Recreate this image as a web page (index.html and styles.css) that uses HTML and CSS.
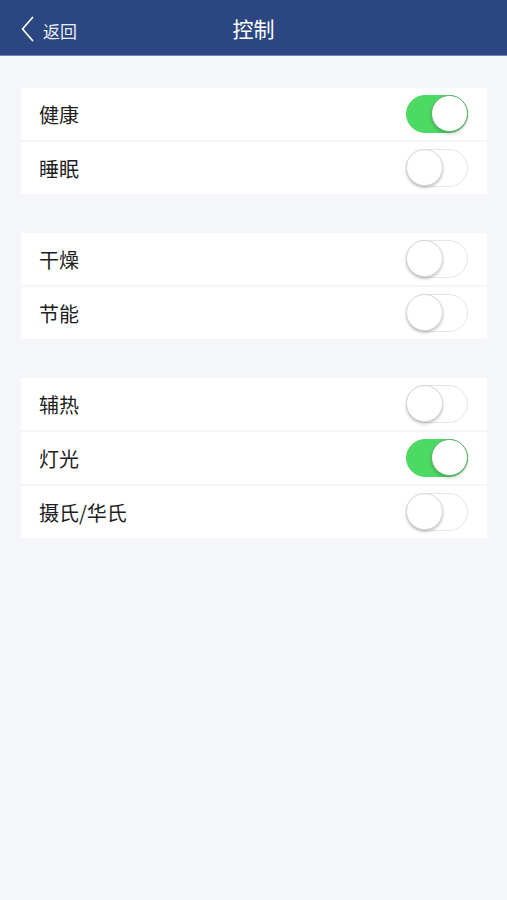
FILE: index.html
```html
<!DOCTYPE html>
<html lang="zh-CN">
<head>
<meta charset="utf-8">
<title>控制</title>
<link rel="stylesheet" href="styles.css">
</head>
<body>
<header class="navbar">
  <a class="back">
    <svg class="chev" width="13" height="26" viewBox="0 0 13 26"><path d="M11.5 1.5 L1.5 13 L11.5 24.5" fill="none" stroke="#ffffff" stroke-width="1.7" stroke-linecap="round" stroke-linejoin="round"/></svg>
    <span class="back-text">返回</span>
  </a>
  <h1 class="title">控制</h1>
</header>
<main class="content">
  <section class="group">
    <div class="row"><span class="label">健康</span><span class="switch on"><span class="knob"></span></span></div>
    <div class="row"><span class="label">睡眠</span><span class="switch"><span class="knob"></span></span></div>
  </section>
  <section class="group">
    <div class="row"><span class="label">干燥</span><span class="switch"><span class="knob"></span></span></div>
    <div class="row"><span class="label">节能</span><span class="switch"><span class="knob"></span></span></div>
  </section>
  <section class="group">
    <div class="row"><span class="label">辅热</span><span class="switch"><span class="knob"></span></span></div>
    <div class="row"><span class="label">灯光</span><span class="switch on"><span class="knob"></span></span></div>
    <div class="row"><span class="label">摄氏/华氏</span><span class="switch"><span class="knob"></span></span></div>
  </section>
</main>
</body>
</html>
```
FILE: styles.css
```css
html, body {
  margin: 0;
  padding: 0;
}
body {
  background: #f4f6f9;
  font-family: "Noto Sans CJK SC", "Noto Sans", sans-serif;
  height: 900px;
}
.navbar {
  height: 55px;
  background: #2b4680;
  border-bottom: 1px solid #6f86b5;
  position: relative;
  display: flex;
  align-items: center;
  justify-content: center;
}
.back {
  position: absolute;
  left: 21px;
  top: 14px;
  display: flex;
  align-items: center;
  gap: 9px;
  color: #ffffff;
}
.chev {
  display: block;
}
.back-text {
  font-size: 17px;
  line-height: 26px;
  padding-top: 4px;
  color: #e8edf6;
}
.title {
  margin: 0;
  font-size: 21px;
  font-weight: normal;
  color: #ffffff;
  line-height: 56px;
}
.content {
  padding: 32px 20px 0 21px;
  display: flex;
  flex-direction: column;
  gap: 39px;
}
.group {
  display: flex;
  flex-direction: column;
  gap: 2px;
}
.row {
  height: 52px;
  background: #ffffff;
  display: flex;
  align-items: center;
  justify-content: space-between;
  padding: 0 19px 0 18px;
}
.label {
  font-size: 20px;
  color: #1e1e1e;
}
.switch {
  width: 62px;
  height: 38px;
  border-radius: 19px;
  box-sizing: border-box;
  border: 1.5px solid #e6e6e6;
  background: #ffffff;
  position: relative;
}
.knob {
  position: absolute;
  top: -1px;
  left: -1px;
  width: 37px;
  height: 37px;
  border-radius: 50%;
  background: #ffffff;
  box-sizing: border-box;
  border: 1px solid #d6d6d6;
  box-shadow: 0 2px 3px rgba(0, 0, 0, 0.22);
}
.switch.on {
  background: #4cd964;
  border-color: #4cd964;
}
.switch.on .knob {
  left: auto;
  right: -1px;
  border-color: #5fae6c;
  box-shadow: 0 2px 3px rgba(0, 0, 0, 0.2);
}
```
